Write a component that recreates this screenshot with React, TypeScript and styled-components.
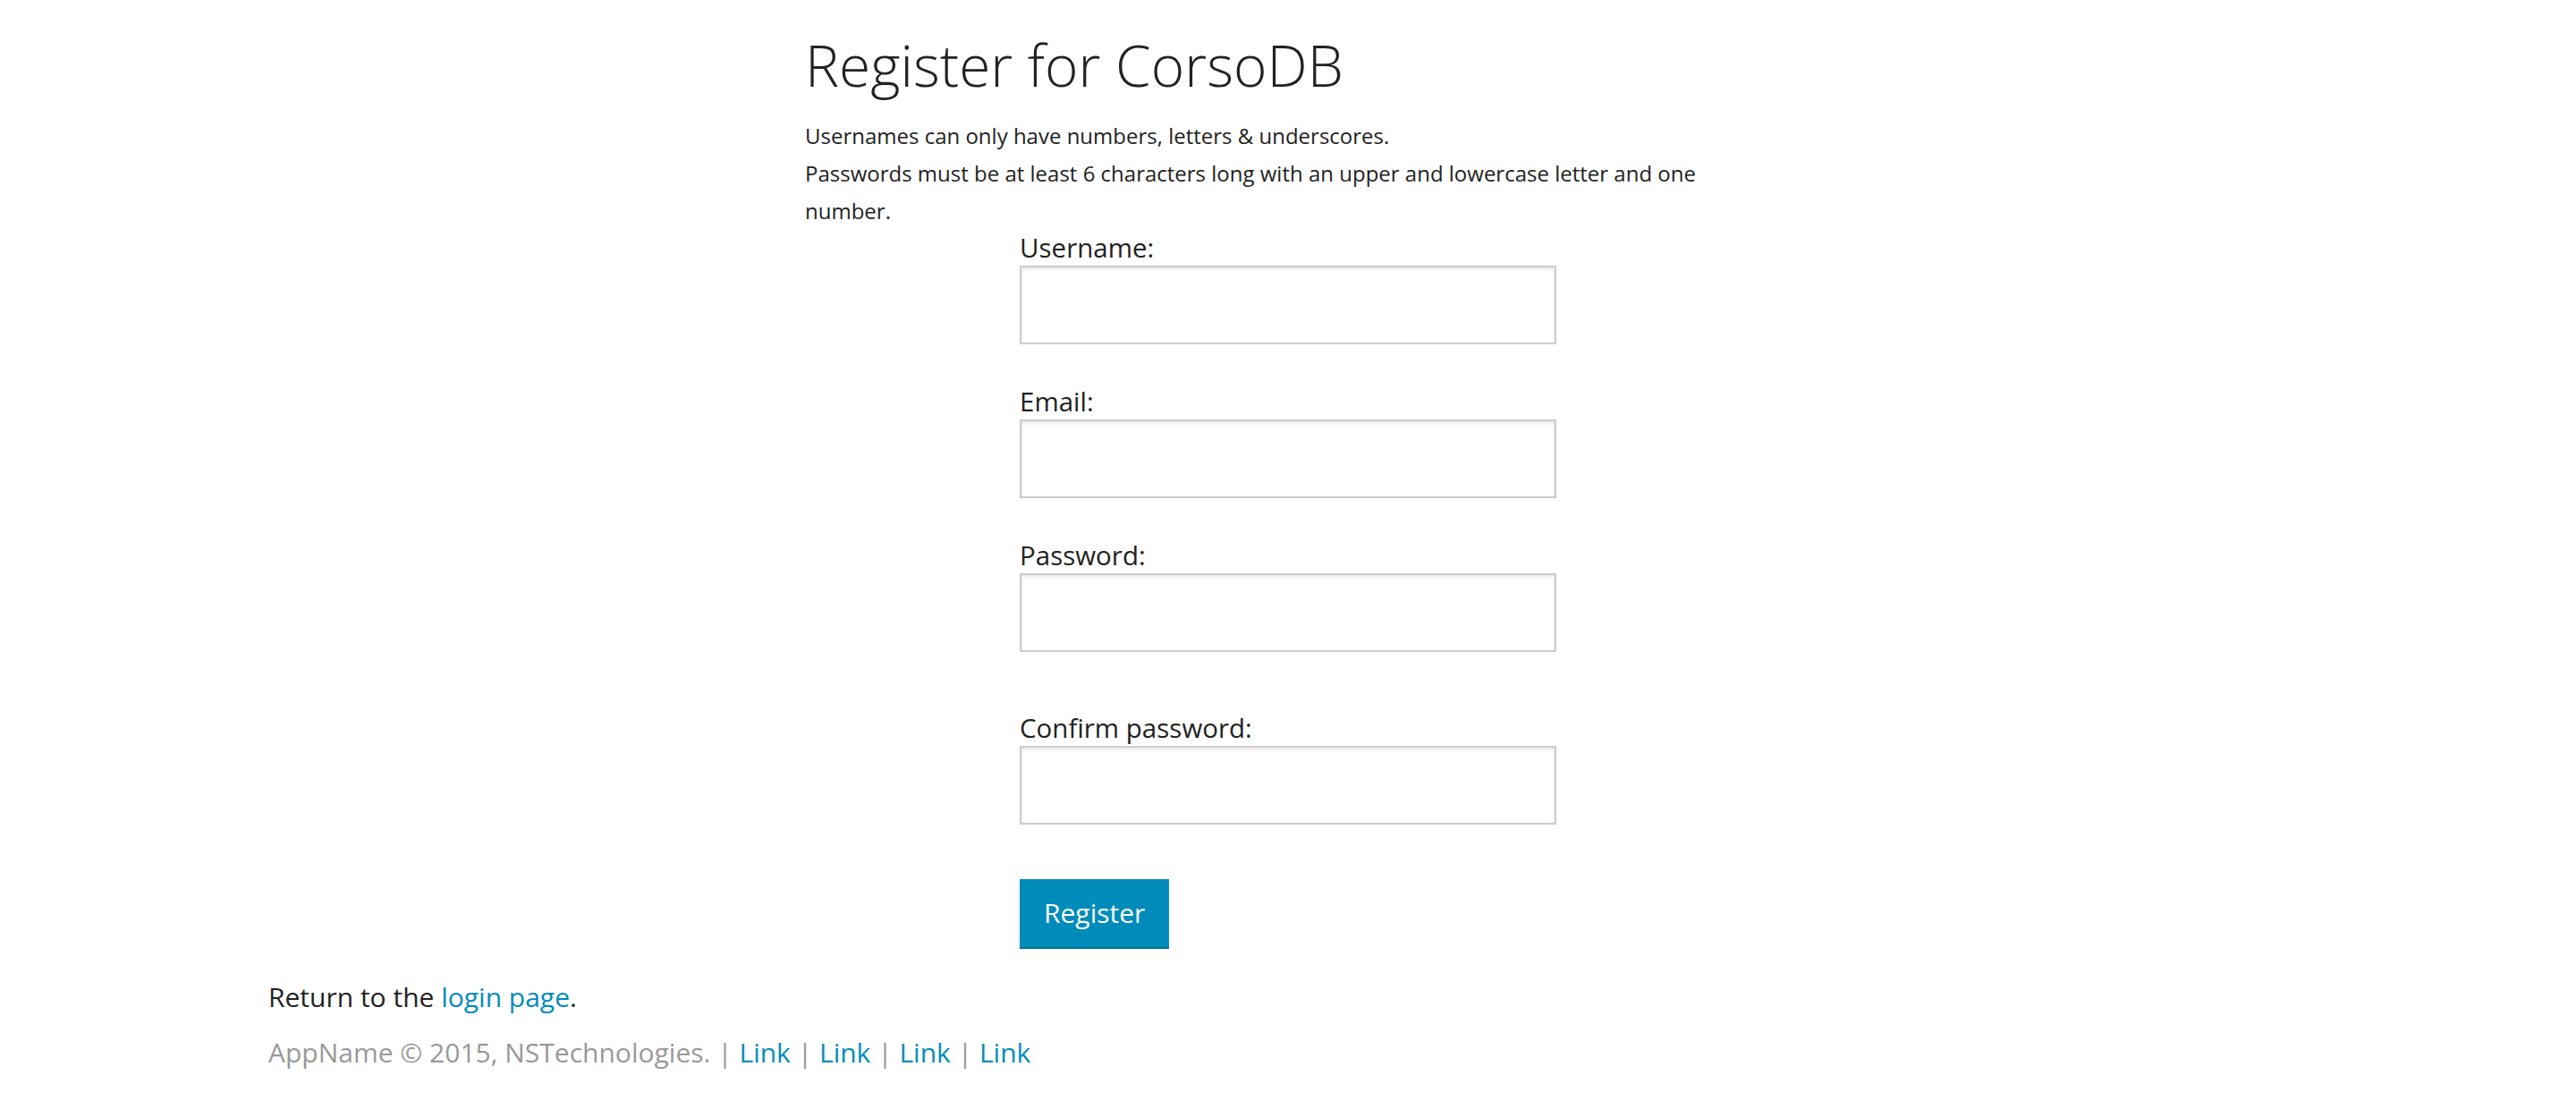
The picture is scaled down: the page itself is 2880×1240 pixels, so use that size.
import React from "react";
import styled, { createGlobalStyle } from "styled-components";

const GlobalStyle = createGlobalStyle`
  html, body {
    margin: 0;
    padding: 0;
    background: #fff;
  }
  body {
    font-family: "Open Sans", "Liberation Sans", sans-serif;
    color: #222;
  }
`;

const Page = styled.div`
  width: 2880px;
  padding-top: 35px;
`;

const Main = styled.main`
  width: 1080px;
  margin: 0 auto;
`;

const Title = styled.h1`
  margin: 0 0 19px;
  font-size: 64px;
  font-weight: 300;
  line-height: 76.8px;
  color: #222;
`;

const Notes = styled.div`
  font-size: 24px;
  line-height: 42px;
`;

const Note = styled.p`
  margin: 0;
`;

const Form = styled.form`
  width: 600px;
  margin: 0 auto;
`;

const Field = styled.div<{ $gap: number }>`
  margin-top: ${(p) => p.$gap}px;
`;

const Label = styled.label`
  display: block;
  font-size: 29.5px;
  line-height: 40px;
`;

const Input = styled.input`
  display: block;
  box-sizing: border-box;
  width: 600px;
  height: 88px;
  margin: 0;
  padding: 0 16px;
  border: 2px solid #ccc;
  border-radius: 0;
  box-shadow: inset 0 2px 4px rgba(0, 0, 0, 0.1);
  font: inherit;
  font-size: 28px;
  outline: none;
`;

const Button = styled.button`
  display: block;
  box-sizing: border-box;
  height: 78px;
  margin-top: 61px;
  padding: 0 27px;
  border: 0;
  border-bottom: 2px solid #007095;
  background: #008cba;
  color: #fff;
  font-family: inherit;
  font-size: 30px;
  cursor: pointer;
`;

const Bottom = styled.div`
  width: 2280px;
  margin: 31px auto 0;
`;

const ReturnLine = styled.p`
  margin: 0;
  font-size: 30px;
  line-height: 45px;
`;

const Link = styled.a`
  color: #008cba;
  text-decoration: none;
`;

const FooterLine = styled.footer`
  margin-top: 17px;
  font-size: 30px;
  line-height: 45px;
  color: #999;
`;

const fields = [
  { id: "username", label: "Username:", type: "text", gap: 0 },
  { id: "email", label: "Email:", type: "email", gap: 44 },
  { id: "password", label: "Password:", type: "password", gap: 44 },
  { id: "confirm", label: "Confirm password:", type: "password", gap: 65 },
];

const footerLinks = ["Link", "Link", "Link", "Link"];

export default function App() {
  return (
    <>
      <GlobalStyle />
      <Page>
        <Main>
          <Title>Register for CorsoDB</Title>
          <Notes>
            <Note>Usernames can only have numbers, letters &amp; underscores.</Note>
            <Note>
              Passwords must be at least 6 characters long with an upper and
              lowercase letter and one number.
            </Note>
          </Notes>
          <Form onSubmit={(e) => e.preventDefault()}>
            {fields.map((f) => (
              <Field key={f.id} $gap={f.gap}>
                <Label htmlFor={f.id}>{f.label}</Label>
                <Input id={f.id} type={f.type} />
              </Field>
            ))}
            <Button type="submit">Register</Button>
          </Form>
        </Main>
        <Bottom>
          <ReturnLine>
            Return to the <Link href="#">login page</Link>.
          </ReturnLine>
          <FooterLine>
            AppName © 2015, NSTechnologies.
            {footerLinks.map((l, i) => (
              <React.Fragment key={i}>
                {" | "}
                <Link href="#">{l}</Link>
              </React.Fragment>
            ))}
          </FooterLine>
        </Bottom>
      </Page>
    </>
  );
}
